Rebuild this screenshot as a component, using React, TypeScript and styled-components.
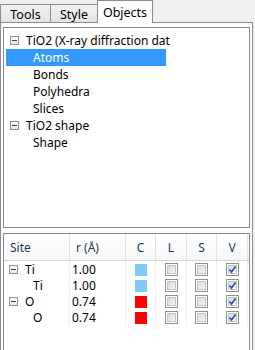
import React from 'react'
import styled, { createGlobalStyle } from 'styled-components'

const Global = createGlobalStyle`
  body {
    margin: 0;
    background: #f0f0f0;
    font-family: "Noto Sans", "Open Sans", sans-serif;
    font-size: 12px;
    color: #000;
  }
`

const Window = styled.div`
  width: 255px;
  height: 350px;
  overflow: hidden;
  background: #f0f0f0;
  display: flex;
  flex-direction: column;
`

const TabBar = styled.div`
  display: flex;
  align-items: flex-end;
  height: 22px;
  position: relative;
  z-index: 2;
`

const Tab = styled.div<{ $active?: boolean; $w: number }>`
  width: ${p => p.$w}px;
  height: ${p => (p.$active ? 23 : 18)}px;
  margin-bottom: ${p => (p.$active ? -1 : 0)}px;
  margin-right: -1px;
  box-sizing: border-box;
  border: 1px solid #898c95;
  border-bottom: none;
  background: ${p => (p.$active ? '#fff' : 'linear-gradient(#f2f2f2, #e3e3e3)')};
  display: flex;
  align-items: center;
  justify-content: center;
  padding-top: ${p => (p.$active ? 0 : 1)}px;
  font-size: 12.5px;
`

const Panel = styled.div`
  flex: 1;
  width: 253px;
  box-sizing: border-box;
  border: 1px solid #898c95;
  border-bottom: none;
  background: #fff;
  padding: 4px 2px 0 2px;
  display: flex;
  flex-direction: column;
  gap: 5px;
`

const TreeBox = styled.div`
  height: 201px;
  box-sizing: border-box;
  border: 1px solid #828790;
  padding-top: 4px;
`

const TreeRow = styled.div<{ $indent: number; $selected?: boolean }>`
  height: 17px;
  display: flex;
  align-items: center;
  margin-left: 2px;
  width: 160px;
  padding-left: ${p => p.$indent}px;
  box-sizing: border-box;
  background: ${p => (p.$selected ? '#3399ff' : 'transparent')};
  color: ${p => (p.$selected ? '#fff' : '#000')};
  white-space: nowrap;
`

const Expander = styled.span`
  width: 9px;
  height: 9px;
  box-sizing: border-box;
  border: 1px solid #919191;
  background: linear-gradient(#fff, #e6e6e6);
  position: relative;
  margin-right: 7px;
  flex: none;
  &::after {
    content: '';
    position: absolute;
    left: 1px;
    top: 3px;
    width: 5px;
    height: 1px;
    background: #404040;
  }
`

const TableBox = styled.div`
  flex: 1;
  box-sizing: border-box;
  border: 1px solid #828790;
  border-bottom: none;
`

const cols = '66px 56px 30px 31px 30px 31px'

const HeaderRow = styled.div`
  display: grid;
  grid-template-columns: ${cols};
  height: 26px;
  background: linear-gradient(#fff, #f6f7f8);
  border-bottom: 1px solid #d5d5d5;
`

const HeadCell = styled.div<{ $center?: boolean }>`
  display: flex;
  align-items: center;
  justify-content: ${p => (p.$center ? 'center' : 'flex-start')};
  padding-left: ${p => (p.$center ? 0 : 6)}px;
  border-right: 1px solid #e3e3e3;
  color: #1e395b;
`

const DataRow = styled.div`
  display: grid;
  grid-template-columns: ${cols};
  height: 16px;
`

const Cell = styled.div<{ $center?: boolean; $indent?: number }>`
  display: flex;
  align-items: center;
  justify-content: ${p => (p.$center ? 'center' : 'flex-start')};
  padding-left: ${p => p.$indent ?? 0}px;
  border-right: 1px solid #f0f0f0;
  white-space: nowrap;
`

const Swatch = styled.span<{ $color: string }>`
  width: 12px;
  height: 12px;
  background: ${p => p.$color};
`

const Box = styled.span`
  width: 13px;
  height: 13px;
  box-sizing: border-box;
  border: 1px solid #8f8f8f;
  background: #fff;
  padding: 1px;
  display: flex;
`

const BoxInner = styled.span`
  flex: 1;
  border: 1px solid #c4c4c4;
  background: linear-gradient(135deg, #d8d8d8, #f8f8f8);
  position: relative;
`

const Check = ({ on }: { on?: boolean }) => (
  <Box>
    <BoxInner>
      {on && (
        <svg width="9" height="9" viewBox="0 0 9 9" style={{ position: 'absolute', left: -1, top: -1 }}>
          <path d="M1.5 4.5 L3.5 7 L7.5 1.5" fill="none" stroke="#2d4ea8" strokeWidth="1.6" />
        </svg>
      )}
    </BoxInner>
  </Box>
)

const tree = [
  { label: 'TiO2 (X-ray diffraction dat', indent: 4, exp: true },
  { label: 'Atoms', indent: 27, selected: true },
  { label: 'Bonds', indent: 27 },
  { label: 'Polyhedra', indent: 27 },
  { label: 'Slices', indent: 27 },
  { label: 'TiO2 shape', indent: 4, exp: true },
  { label: 'Shape', indent: 27 },
]

const sites = [
  { name: 'Ti', r: '1.00', color: '#80c8ff', parent: true },
  { name: 'Ti', r: '1.00', color: '#80c8ff' },
  { name: 'O', r: '0.74', color: '#ff0000', parent: true },
  { name: 'O', r: '0.74', color: '#ff0000' },
]

export default function App() {
  return (
    <Window>
      <Global />
      <TabBar>
        <Tab $w={51}>Tools</Tab>
        <Tab $w={48}>Style</Tab>
        <Tab $w={56} $active>Objects</Tab>
      </TabBar>
      <Panel>
        <TreeBox>
          {tree.map((t, i) => (
            <TreeRow key={i} $indent={t.indent} $selected={t.selected}>
              {t.exp && <Expander />}
              {t.label}
            </TreeRow>
          ))}
        </TreeBox>
        <TableBox>
          <HeaderRow>
            <HeadCell>Site</HeadCell>
            <HeadCell>r (Å)</HeadCell>
            <HeadCell $center>C</HeadCell>
            <HeadCell $center>L</HeadCell>
            <HeadCell $center>S</HeadCell>
            <HeadCell $center>V</HeadCell>
          </HeaderRow>
          {sites.map((s, i) => (
            <DataRow key={i}>
              <Cell $indent={s.parent ? 5 : 29}>
                {s.parent && <Expander />}
                {s.name}
              </Cell>
              <Cell $indent={2}>{s.r}</Cell>
              <Cell $center><Swatch $color={s.color} /></Cell>
              <Cell $center><Check /></Cell>
              <Cell $center><Check /></Cell>
              <Cell $center><Check on /></Cell>
            </DataRow>
          ))}
        </TableBox>
      </Panel>
    </Window>
  )
}
